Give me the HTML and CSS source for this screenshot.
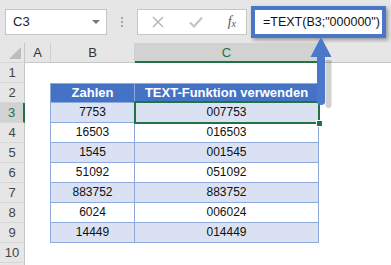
FILE: index.html
```html
<!DOCTYPE html>
<html lang="de">
<head>
    <meta charset="UTF-8">
    <title>TEXT-Funktion</title>
    <link rel="stylesheet" href="styles.css">
</head>
<body>

<div class="toolbar">
    <div class="namebox">
        <span>C3</span>
        <span class="caret"></span>
    </div>
    <div class="dots"><i></i><i></i><i></i></div>
    <div class="fxbox">
        <svg width="14" height="14" viewBox="0 0 14 14"><path d="M2 2 L12 12 M12 2 L2 12" stroke="#b4b4b4" stroke-width="1.4" fill="none"/></svg>
        <svg width="16" height="14" viewBox="0 0 16 14"><path d="M2 7.5 L6 11.5 L14 2.5" stroke="#c4c4c4" stroke-width="2.2" fill="none"/></svg>
        <span class="fx">f<sub>x</sub></span>
    </div>
    <div class="formula">=TEXT(B3;"000000")</div>
</div>

<div class="sheet">
    <div class="row colheads">
        <div class="rh corner"><span class="tri"></span></div>
        <div class="ch ca">A</div>
        <div class="ch cb">B</div>
        <div class="ch cc active">C</div>
        <div class="ch rest"></div>
    </div>
    <div class="row">
        <div class="rh">1</div>
        <div class="ca"></div><div class="cb"></div><div class="cc"></div>
    </div>
    <div class="row">
        <div class="rh">2</div>
        <div class="ca"></div>
        <div class="cb t th first">Zahlen</div>
        <div class="cc t th">TEXT-Funktion verwenden</div>
    </div>
    <div class="row">
        <div class="rh active">3</div>
        <div class="ca"></div>
        <div class="cb t band">7753</div>
        <div class="cc t band selected">007753<span class="handle"></span></div>
    </div>
    <div class="row">
        <div class="rh">4</div>
        <div class="ca"></div>
        <div class="cb t">16503</div>
        <div class="cc t">016503</div>
    </div>
    <div class="row">
        <div class="rh">5</div>
        <div class="ca"></div>
        <div class="cb t band">1545</div>
        <div class="cc t band">001545</div>
    </div>
    <div class="row">
        <div class="rh">6</div>
        <div class="ca"></div>
        <div class="cb t">51092</div>
        <div class="cc t">051092</div>
    </div>
    <div class="row">
        <div class="rh">7</div>
        <div class="ca"></div>
        <div class="cb t band">883752</div>
        <div class="cc t band">883752</div>
    </div>
    <div class="row">
        <div class="rh">8</div>
        <div class="ca"></div>
        <div class="cb t">6024</div>
        <div class="cc t">006024</div>
    </div>
    <div class="row">
        <div class="rh">9</div>
        <div class="ca"></div>
        <div class="cb t band">14449</div>
        <div class="cc t band">014449</div>
    </div>
    <div class="row">
        <div class="rh">10</div>
    </div>
    <div class="row">
        <div class="rh"></div>
    </div>
</div>

<!-- Pfeil vom Formelfeld zur markierten Zelle -->
<svg class="arrow" width="30" height="74" viewBox="0 0 30 74">
    <path d="M13 21 L19 21 L19 66 Q19 69 16 69 Q13 69 13 66 Z" fill="#000" opacity="0.18" transform="translate(2.5,2)"/>
    <path d="M10 0 L20.5 20 L14 20 L14 65 Q14 68 10 68 Q6 68 6 65 L6 20 L-0.5 20 Z" fill="#4a78cb" transform="translate(1,0)"/>
</svg>

</body>
</html>
```

FILE: styles.css
```css
body {
    margin: 0;
    background-color: #ffffff;
    font-family: "Liberation Sans", Arial, sans-serif;
    position: relative;
    overflow: hidden;
    height: 265px;
}

.toolbar {
    height: 43px;
    background-color: #e6e6e6;
    display: flex;
    align-items: center;
    padding-left: 5px;
    box-sizing: border-box;
}

.namebox {
    width: 102px;
    height: 26px;
    box-sizing: border-box;
    background-color: #ffffff;
    border: 1px solid #c6c6c6;
    display: flex;
    align-items: center;
    justify-content: space-between;
    padding: 0 6px 0 7px;
    font-size: 13px;
    color: #222;
}

.caret {
    width: 0;
    height: 0;
    border-left: 4px solid transparent;
    border-right: 4px solid transparent;
    border-top: 4px solid #777;
}

.dots {
    width: 30px;
    display: flex;
    flex-direction: column;
    align-items: center;
    gap: 2px;
}

.dots i {
    width: 2px;
    height: 2px;
    background-color: #a6a6a6;
}

.fxbox {
    width: 110px;
    height: 26px;
    box-sizing: border-box;
    background-color: #ffffff;
    border: 1px solid #c6c6c6;
    display: flex;
    align-items: center;
    justify-content: space-between;
    padding: 0 10px 0 13px;
}

.fx {
    font-family: "Liberation Serif", serif;
    font-style: italic;
    font-size: 14px;
    color: #555;
}

.fx sub {
    font-size: 10px;
    vertical-align: -1px;
}

.formula {
    margin-left: 4px;
    width: 135px;
    height: 32px;
    box-sizing: border-box;
    background-color: #ffffff;
    border: 4px solid #4a76c8;
    box-shadow: 2px 2px 4px rgba(0, 0, 0, 0.35);
    font-size: 12.5px;
    color: #111;
    display: flex;
    align-items: center;
    padding-left: 8px;
    white-space: nowrap;
}

.row {
    display: flex;
    height: 20px;
    font-size: 12px;
    color: #111;
}

.rh {
    width: 25px;
    flex: none;
    box-sizing: border-box;
    background-color: #e6e6e6;
    border-right: 1px solid #c6c6c6;
    border-bottom: 1px solid #d6d6d6;
    text-align: center;
    line-height: 19px;
    font-size: 13px;
    color: #444;
}

.rh.active {
    background-color: #d2d2d2;
    border-right: 2px solid #217346;
    color: #217346;
}

.corner {
    position: relative;
}

.tri {
    position: absolute;
    right: 3px;
    bottom: 3px;
    width: 0;
    height: 0;
    border-left: 12px solid transparent;
    border-bottom: 12px solid #bcbcbc;
}

.ca { width: 26px; flex: none; box-sizing: border-box; }
.cb { width: 84px; flex: none; box-sizing: border-box; }
.cc { width: 184px; flex: none; box-sizing: border-box; }

.colheads .ch {
    background-color: #e6e6e6;
    border-right: 1px solid #d0d0d0;
    border-bottom: 1px solid #c6c6c6;
    text-align: center;
    line-height: 19px;
    font-size: 13px;
    color: #333;
}

.colheads .ch.active {
    background-color: #d2d2d2;
    border-bottom: 2px solid #217346;
    color: #217346;
}

.colheads .rest {
    flex: 1;
    border-right: none;
}

.t {
    text-align: center;
    line-height: 19px;
    border-right: 1px solid #8ea9db;
    border-bottom: 1px solid #8ea9db;
}

.cb.t {
    border-left: 1px solid #8ea9db;
    width: 85px;
    margin-left: -1px;
}

.th {
    background-color: #4472c4;
    color: #ffffff;
    font-weight: bold;
    font-size: 13px;
    border-top: 1px solid #8ea9db;
    line-height: 18px;
}

.band {
    background-color: #d9e1f2;
}

.selected {
    position: relative;
}

.selected::after {
    content: "";
    position: absolute;
    left: -1px;
    top: -2px;
    right: -2px;
    bottom: -2px;
    border: 2px solid #217346;
}

.handle {
    position: absolute;
    right: -5px;
    bottom: -5px;
    width: 5px;
    height: 5px;
    background-color: #217346;
    border: 1px solid #ffffff;
    z-index: 1;
}

.arrow {
    position: absolute;
    left: 310px;
    top: 37px;
}
```
